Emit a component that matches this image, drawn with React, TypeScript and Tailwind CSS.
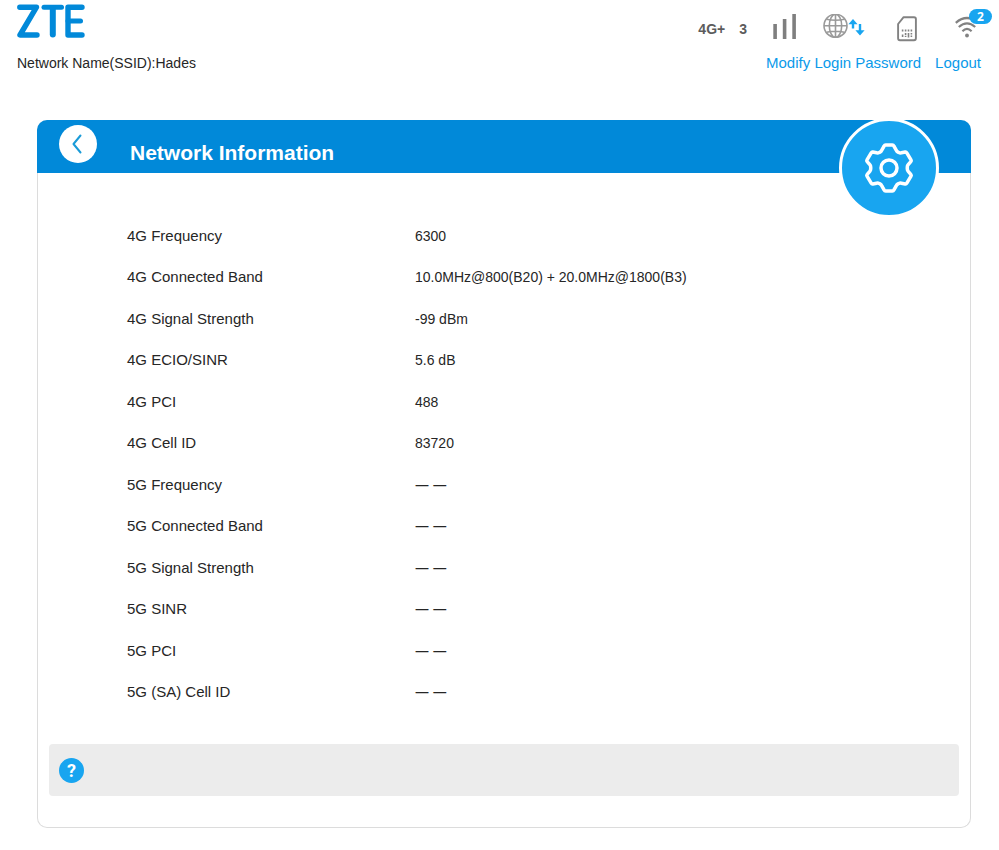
interface InfoRow {
  label: string;
  value: string | null;
}

const ROWS: InfoRow[] = [
  { label: "4G Frequency", value: "6300" },
  { label: "4G Connected Band", value: "10.0MHz@800(B20) + 20.0MHz@1800(B3)" },
  { label: "4G Signal Strength", value: "-99 dBm" },
  { label: "4G ECIO/SINR", value: "5.6 dB" },
  { label: "4G PCI", value: "488" },
  { label: "4G Cell ID", value: "83720" },
  { label: "5G Frequency", value: null },
  { label: "5G Connected Band", value: null },
  { label: "5G Signal Strength", value: null },
  { label: "5G SINR", value: null },
  { label: "5G PCI", value: null },
  { label: "5G (SA) Cell ID", value: null },
];

function Logo() {
  return (
    <svg
      role="img"
      aria-label="ZTE"
      className="block w-[70px] h-9"
      viewBox="1 0 70 36"
      fill="none"
      stroke="#0189d9"
      strokeWidth="5"
      strokeLinecap="round"
      strokeLinejoin="round"
    >
      <polyline points="3.8,4.2 20.5,4.2 4,32 21,32" strokeWidth="5.4" />
      <line x1="28" y1="4.2" x2="45.5" y2="4.2" />
      <line x1="36.8" y1="5" x2="36.8" y2="31.5" strokeWidth="6" />
      <polyline points="66,4.2 52,4.2 52,32 66,32" strokeWidth="5.4" />
      <line x1="52" y1="18" x2="64.5" y2="18" />
    </svg>
  );
}

function SignalIcon() {
  return (
    <svg className="w-6 h-[26px]" viewBox="0 0 24 26" fill="#7f7f7f">
      <rect x="0.3" y="10" width="3.6" height="15" />
      <rect x="9.8" y="5" width="3.6" height="20" />
      <rect x="19.3" y="0" width="3.6" height="25" />
    </svg>
  );
}

function GlobeIcon() {
  return (
    <svg className="w-[42px] h-[26px]" viewBox="0 0 42 26" fill="none">
      <g stroke="#9a9a9a" strokeWidth="1.6">
        <circle cx="12.5" cy="11.8" r="11.5" />
        <ellipse cx="12.5" cy="11.8" rx="6.2" ry="11.5" />
        <path d="M12.5 .3v23M1 11.8h23M3.5 5.3q9 2 18 0M3.5 18.3q9-2 18 0" />
      </g>
      <g fill="#18a5f0">
        <path d="M30 5l4.6 5.2h-3.4v4.3h-2.4v-4.3h-3.4z" />
        <path d="M37 21.5l4.6-5.2h-3.4v-6.3h-2.4v6.3h-3.4z" />
      </g>
    </svg>
  );
}

function SimIcon() {
  return (
    <svg className="w-5 h-[26px]" viewBox="0 0 20 26" fill="none" stroke="#828282">
      <path
        d="M6.6 1.2h10.4a1.9 1.9 0 0 1 1.9 1.9v19.2a1.9 1.9 0 0 1-1.9 1.9H3a1.9 1.9 0 0 1-1.9-1.9V8z"
        strokeWidth="1.9"
        strokeLinejoin="round"
      />
      <g strokeWidth="1.6">
        <path d="M5.6 13.5v2M8.6 13.5v2M11.5 13.5v2M14.4 13.5v2" />
        <path d="M5.6 18.5v2.5M8.6 17v2.2M8.6 20v1M11.5 17v4.5M14.4 17v1.5M14.4 19.5v1.5" />
      </g>
    </svg>
  );
}

function WifiIcon() {
  return (
    <svg className="w-6 h-6" viewBox="0 0 24 24" fill="none" stroke="#828282" strokeWidth="2.2">
      <path d="M0.8 7.8Q12 -1.8 23.2 7.8" />
      <path d="M3.8 12Q12 4.8 20.2 12" />
      <path d="M7.4 16.2Q12 11.6 16.6 16.2" />
      <circle cx="12" cy="20.5" r="1.9" fill="#828282" stroke="none" />
    </svg>
  );
}

function GearIcon() {
  return (
    <svg
      className="w-[50px] h-[50px]"
      viewBox="0 0 50 50"
      fill="none"
      stroke="#fff"
      strokeWidth="3.5"
      strokeLinejoin="round"
    >
      <circle cx="25" cy="25" r="8" />
      <path d="M21.6 1.9h6.8q1 0 1.4 1l2.4 4.2q.5 1.3 1.8 2l.8.4q1.2.6 2.6.3l3.8-.8q1-.2 1.6.8l4.2 7q.6 1-.2 1.9l-2.6 3q-.9 1-.9 2.3v2q0 1.3.9 2.3l2.6 3q.8.9.2 1.9l-4.2 7q-.6 1-1.6.8l-3.8-.8q-1.4-.3-2.6.3l-.8.4q-1.3.7-1.8 2l-2.4 4.2q-.4 1-1.4 1h-6.8q-1 0-1.4-1l-2.4-4.2q-.5-1.3-1.8-2l-.8-.4q-1.2-.6-2.6-.3l-3.8.8q-1 .2-1.6-.8l-4.2-7q-.6-1 .2-1.9l2.6-3q.9-1 .9-2.3v-2q0-1.3-.9-2.3l-2.6-3q-.8-.9-.2-1.9l4.2-7q.6-1 1.6-.8l3.8.8q1.4.3 2.6-.3l.8-.4q1.3-.7 1.8-2l2.4-4.2q.4-1 1.4-1z" />
    </svg>
  );
}

function BackIcon() {
  return (
    <svg
      className="w-5 h-5"
      viewBox="0 0 20 20"
      fill="none"
      stroke="#1a9bd8"
      strokeWidth="2"
      strokeLinecap="round"
      strokeLinejoin="round"
    >
      <path d="M12.5 1.5L5.5 10l7 8.5" />
    </svg>
  );
}

function StatusBar() {
  return (
    <div className="flex items-center h-[53px] pt-px text-sm font-bold text-[#5c5c5c]">
      <span className="pt-[3px]">4G+</span>
      <span className="ml-[14px] mr-[26px] pt-[3px]">3</span>
      <SignalIcon />
      <span className="ml-[26px] mr-8">
        <GlobeIcon />
      </span>
      <span className="pt-1">
        <SimIcon />
      </span>
      <span className="relative ml-[38px] mr-[2px]">
        <WifiIcon />
        <span className="absolute left-[14px] -top-[6px] w-[23px] h-[15px] rounded-full bg-[#18a5f0] font-['Open_Sans',sans-serif] text-xs leading-[15px] text-white text-center">
          2
        </span>
      </span>
    </div>
  );
}

export default function App() {
  return (
    <div className="min-h-screen bg-white pb-6 font-['Liberation_Sans',Arial,sans-serif] text-[15px] leading-5 text-[#262626]">
      <header className="flex justify-between pl-[17px] pr-[18px]">
        <div>
          <div className="h-[53px] pt-[3px]">
            <Logo />
          </div>
          <p className="text-sm leading-5">Network Name(SSID):Hades</p>
        </div>
        <div className="flex flex-col items-end">
          <StatusBar />
          <nav className="flex gap-[14px] text-[#0a9aea]">
            <a href="#password">Modify Login Password</a>
            <a href="#logout">Logout</a>
          </nav>
        </div>
      </header>

      <main className="mt-[47px] ml-[37px] mr-7 border border-[#dcdcdc] border-t-0 rounded-[10px]">
        <div className="relative flex h-[53px] -mx-px px-[22px] rounded-t-[10px] bg-[#0189d9]">
          <button
            type="button"
            aria-label="Back"
            className="flex items-center justify-center w-[38px] h-[38px] mt-[5px] rounded-full bg-white"
          >
            <BackIcon />
          </button>
          <h1 className="ml-[33px] mt-[21px] text-[21px] leading-6 font-bold text-white">Network Information</h1>
          <div className="absolute right-8 -top-[2px] flex items-center justify-center w-[100px] h-[100px] rounded-full border-[3px] border-white bg-[#18a5f0]">
            <GearIcon />
          </div>
        </div>

        <table className="w-full h-[498px] mt-[42px]">
          <tbody>
            {ROWS.map(({ label, value }) => (
              <tr key={label}>
                <th scope="row" className="w-[377px] pl-[89px] text-left font-normal">
                  {label}
                </th>
                <td className="text-sm leading-5">
                  {value ?? <span className="block font-['Noto_Sans',sans-serif]">— —</span>}
                </td>
              </tr>
            ))}
          </tbody>
        </table>

        <div className="flex items-center h-[52px] mx-[11px] mt-[31px] mb-[31px] px-[10px] rounded bg-[#ececec]">
          <button
            type="button"
            aria-label="Help"
            className="w-[25px] h-[25px] rounded-full bg-[#18a5f0] font-['Roboto',sans-serif] text-lg leading-[25px] font-bold text-white"
          >
            ?
          </button>
        </div>
      </main>
    </div>
  );
}
